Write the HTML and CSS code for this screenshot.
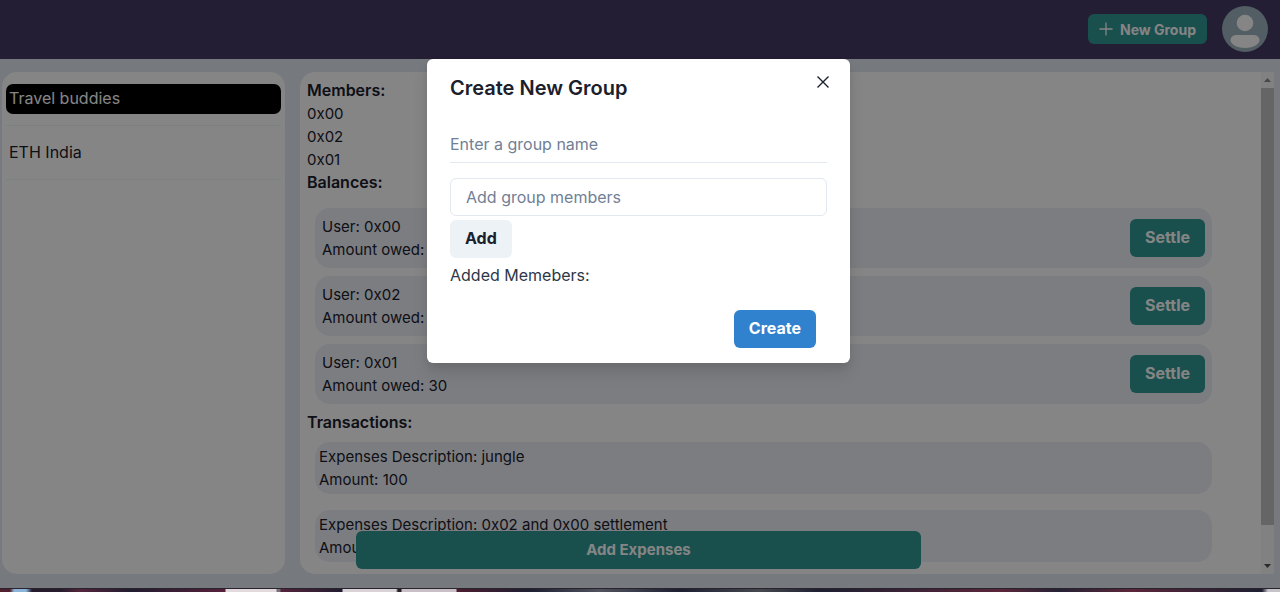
FILE: index.html
```html
<!DOCTYPE html>
<html lang="en">
<head>
<meta charset="utf-8">
<title>Groups</title>
<link rel="stylesheet" href="styles.css">
</head>
<body>
<div class="app">
  <header class="topbar">
    <button class="btn btn-small" type="button">
      <svg class="plus" viewBox="0 0 14 14" aria-hidden="true"><path d="M7 0.500v13M0.500 7h13"/></svg>
      New Group
    </button>
    <svg class="avatar" viewBox="0 0 46 46" role="img" aria-label="Account">
      <circle class="avatar-bg" cx="23" cy="23" r="23"/>
      <circle class="avatar-fg" cx="23" cy="17" r="8.3"/>
      <path class="avatar-fg" d="M15 29h16c4 0 6.500 2 6.500 5.500C37 39 30 42 23 42S9 39 8.500 34.500C8.500 31 11 29 15 29z"/>
    </svg>
  </header>
  <main class="columns">
    <nav class="sidebar">
      <div class="entry"><button class="group group-active" type="button">Travel buddies</button></div>
      <div class="entry"><button class="group" type="button">ETH India</button></div>
    </nav>
    <section class="panel">
      <div class="content">
        <h2>Members:</h2>
        <p>0x00</p>
        <p>0x02</p>
        <p>0x01</p>
        <h2>Balances:</h2>
        <div class="balances">
          <div class="balance"><div><p>User: 0x00</p><p>Amount owed: 30</p></div><button class="btn" type="button">Settle</button></div>
          <div class="balance"><div><p>User: 0x02</p><p>Amount owed: 30</p></div><button class="btn" type="button">Settle</button></div>
          <div class="balance"><div><p>User: 0x01</p><p>Amount owed: 30</p></div><button class="btn" type="button">Settle</button></div>
        </div>
        <h2>Transactions:</h2>
        <div class="transactions">
          <div class="transaction"><p>Expenses Description: jungle</p><p>Amount: 100</p></div>
          <div class="transaction"><p>Expenses Description: 0x02 and 0x00 settlement</p><p>Amount: 30</p></div>
        </div>
      </div>
      <div class="scrollbar" aria-hidden="true">
        <svg class="arrow arrow-off" viewBox="0 0 13 16"><path d="M3 10h7L6.500 6z"/></svg>
        <div class="track"><div class="thumb"></div></div>
        <svg class="arrow" viewBox="0 0 13 16"><path d="M3 6h7L6.500 10z"/></svg>
      </div>
      <button class="btn add-expenses" type="button">Add Expenses</button>
    </section>
  </main>
  <div class="overlay">
    <form class="modal" role="dialog" aria-labelledby="modal-title">
      <div class="modal-head">
        <h1 id="modal-title">Create New Group</h1>
        <button class="close" type="button" aria-label="Close">
          <svg viewBox="0 0 12 12" aria-hidden="true"><path d="M0.500 0.500l11 11M11.500 0.500L0.500 11.500"/></svg>
        </button>
      </div>
      <input class="field field-line" type="text" placeholder="Enter a group name" aria-label="Group name">
      <input class="field field-box" type="text" placeholder="Add group members" aria-label="Group members">
      <button class="btn btn-light" type="button">Add</button>
      <p class="added">Added Memebers:</p>
      <div class="modal-foot"><button class="btn btn-blue" type="button">Create</button></div>
    </form>
  </div>
</div>
<div class="taskbar"></div>
</body>
</html>
```
FILE: styles.css
```css
* { box-sizing: border-box; }
body {
  margin: 0;
  height: 100vh;
  display: flex;
  flex-direction: column;
  overflow: hidden;
  font: 400 15px/23px Inter, sans-serif;
  color: #1a202c;
}
h1, h2, p { margin: 0; }
h2 { font-size: 16px; line-height: 23px; font-weight: 600; }
button, input { font: inherit; color: inherit; }
button { border: 0; }

.app { position: relative; flex: 1; min-height: 0; display: flex; flex-direction: column; }
.topbar {
  height: 59px;
  flex: none;
  display: flex;
  align-items: center;
  justify-content: flex-end;
  gap: 15px;
  padding: 0 12px 1px 0;
  background: #463a66;
}
.avatar { width: 46px; height: 46px; }
.avatar-bg { fill: #a0b2c0; }
.avatar-fg { fill: #fff; }

.btn {
  height: 38px;
  padding: 0 15px 2px;
  border-radius: 6px;
  background: #319795;
  color: #fff;
  font-size: 16px;
  font-weight: 700;
}
.btn-small {
  height: 30px;
  padding: 0 11px;
  display: flex;
  align-items: center;
  gap: 7px;
  font-size: 14px;
}
.plus { width: 14px; height: 14px; fill: none; stroke: #fff; stroke-width: 1.3; }

.columns {
  flex: 1;
  min-height: 0;
  display: flex;
  gap: 15px;
  padding: 13px 6px 14px 2px;
  background: #e2e8f0;
}
.sidebar {
  width: 283px;
  flex: none;
  padding: 0 4px;
  border-radius: 15px;
  background: #fff;
}
.entry { padding: 12px 0 11px; border-bottom: 1px solid #edf2f7; }
.group {
  display: block;
  width: 100%;
  height: 30px;
  padding: 0 3px 2px;
  border-radius: 7px;
  background: transparent;
  font-size: 16px;
  text-align: left;
}
.group-active { background: #000; color: #fff; }

.panel {
  position: relative;
  flex: 1;
  min-width: 0;
  display: flex;
  overflow: hidden;
  border-radius: 15px 0 0 15px;
  background: #fff;
}
.content { flex: 1; padding: 7px 49px 0 7px; overflow: hidden; }
.balances { display: grid; gap: 8px; margin: 14px 0 7px 8px; }
.balance {
  display: flex;
  align-items: center;
  justify-content: space-between;
  padding: 7px;
  border-radius: 15px;
  background: #edf0f8;
}
.transactions { display: grid; gap: 16px; margin: 8px 0 0 8px; }
.transaction { padding: 3px 4px; border-radius: 15px; background: #edf0f8; }
.add-expenses { position: absolute; left: 56px; bottom: 5px; width: 58%; font-size: 15px; }

.scrollbar { width: 13px; flex: none; display: flex; flex-direction: column; background: #f8f8f8; }
.arrow { width: 13px; height: 16px; fill: #505050; }
.arrow-off { fill: #8a8a8a; }
.track { flex: 1; }
.thumb { height: 93%; background: #c1c1c1; }

.overlay {
  position: absolute;
  inset: 0;
  display: flex;
  justify-content: center;
  align-items: flex-start;
  padding: 59px 3px 0 0;
  background: rgba(0, 0, 0, 0.48);
}
.modal {
  width: 423px;
  padding: 15px 23px;
  border-radius: 6px;
  background: #fff;
  box-shadow: 0 10px 15px rgba(0, 0, 0, 0.1), 0 4px 6px rgba(0, 0, 0, 0.05);
}
.modal-head { display: flex; justify-content: space-between; align-items: flex-start; }
h1 { font-size: 20px; line-height: 28px; font-weight: 600; }
.close { display: flex; padding: 2px; margin-right: -4px; background: transparent; }
.close svg { width: 12px; height: 12px; fill: none; stroke: #1a202c; stroke-width: 1.4; }
.field {
  display: block;
  width: 100%;
  height: 38px;
  border: 1px solid #e2e8f0;
  background: #fff;
  font-size: 16px;
}
.field::placeholder { color: #718096; opacity: 1; }
.field-line { margin: 23px 0 15px; padding: 0; border-width: 0 0 1px; }
.field-box { margin-bottom: 4px; padding: 0 15px; border-radius: 6px; }
.btn-light { display: block; background: #edf2f7; color: #1a202c; }
.added { margin-top: 6px; font-size: 16px; color: #2d3748; }
.modal-foot { display: flex; justify-content: flex-end; padding: 23px 11px 0 0; }
.btn-blue { background: #3182ce; }

.taskbar {
  height: 4px;
  flex: none;
  border-top: 1px solid #28232d;
  background: linear-gradient(90deg, #50202f 0 10px, #8cb4d8 14px 26px, #251c2e 32px 60px, #54253b 80px, #211c30 130px, #55213a 225px, #e2dadd 226px 276px, #77717a 277px 280px, #54233a 281px, #211c30 342px, #d9d2d6 343px 396px, #222 398px 401px, #c8c0c6 402px 456px, #4c1c30 457px, #1d1f32 530px, #50535d 600px, #1d1f32 680px, #45484d 760px, #1d1f32 820px, #5b2639 1000px, #252235 1060px, #5b2639 1130px, #1d1f32 1262px, #c5c2c8 1268px);
}
```
